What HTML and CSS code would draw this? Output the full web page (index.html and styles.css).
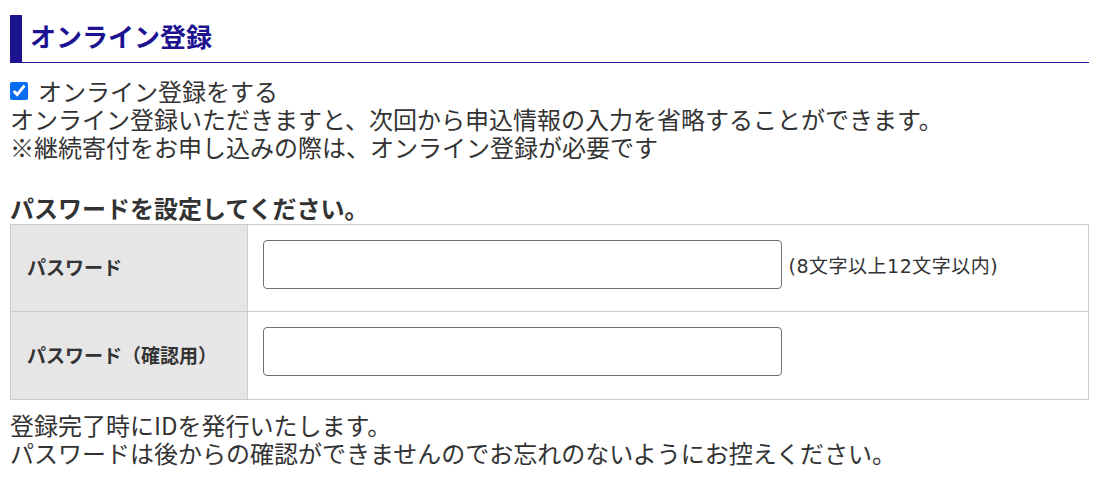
FILE: index.html
```html
<!DOCTYPE html>
<html lang="ja">
    <head>
        <meta charset="utf-8"/>
        <meta name="viewport" content="width=device-width, initial-scale=1">
        <title>オンライン登録</title>
        <link rel="stylesheet" href="styles.css">
    </head>
    <body>
        <div class="register">
            <h2 class="register-title">オンライン登録</h2>

            <div class="register-intro">
                <label class="check-line">
                    <input type="checkbox" checked>
                    <span>オンライン登録をする</span>
                </label>
                <p>オンライン登録いただきますと、次回から申込情報の入力を省略することができます。</p>
                <p>※継続寄付をお申し込みの際は、オンライン登録が必要です</p>
            </div>

            <h3 class="register-sub">パスワードを設定してください。</h3>

            <table class="form-table">
                <tr>
                    <th>パスワード</th>
                    <td>
                        <input type="password" class="text-input">
                        <span class="note">(8文字以上12文字以内)</span>
                    </td>
                </tr>
                <tr>
                    <th>パスワード（確認用）</th>
                    <td>
                        <input type="password" class="text-input">
                    </td>
                </tr>
            </table>

            <div class="register-foot">
                <p>登録完了時にIDを発行いたします。</p>
                <p>パスワードは後からの確認ができませんのでお忘れのないようにお控えください。</p>
            </div>
        </div>
    </body>
</html>
```

FILE: styles.css
```css
:root {
    --text: #333;
    --navy: #1d1391;
    --line: #cccccc;
}

html, body {
    margin: 0;
    padding: 0;
    background: #fff;
    color: var(--text);
    font-family: "Noto Sans CJK JP", "Noto Sans", sans-serif;
}

.register {
    padding: 15px 10px 0 10px;
}

.register p {
    margin: 0;
}

.register-title {
    margin: 0;
    height: 48px;
    box-sizing: border-box;
    display: flex;
    align-items: center;
    border-left: 12px solid var(--navy);
    border-bottom: 1px solid var(--navy);
    padding: 0 0 5px 8px;
    font-size: 26px;
    font-weight: bold;
    color: var(--navy);
    line-height: 1;
}

.register-intro {
    margin-top: 14px;
    font-size: 24px;
    line-height: 28px;
}

.check-line {
    display: flex;
    align-items: center;
    gap: 10px;
}

.check-line input {
    margin: 0;
    width: 18px;
    height: 18px;
    accent-color: #0a6cf0;
}

.register-sub {
    margin: 33px 0 2px 0;
    font-size: 24px;
    line-height: 28px;
    font-weight: bold;
}

.form-table {
    width: 100%;
    border-collapse: collapse;
}

.form-table th,
.form-table td {
    border: 1px solid var(--line);
    height: 87px;
    box-sizing: border-box;
}

.form-table tr + tr th,
.form-table tr + tr td {
    height: 88px;
}

.form-table th {
    width: 237px;
    background: #e6e6e6;
    text-align: left;
    padding: 0 16px 3px 16px;
    font-size: 19px;
    font-weight: bold;
}

.form-table td {
    padding: 15px 15px 22px 15px;
    vertical-align: top;
}

.text-input {
    box-sizing: border-box;
    width: 519px;
    height: 49px;
    border: 1px solid #707070;
    border-radius: 4px;
    margin: 0;
    vertical-align: middle;
}

.note {
    font-family: "DejaVu Sans", "Noto Sans CJK JP", sans-serif;
    font-size: 19px;
    letter-spacing: 0.5px;
    margin-left: 3px;
    vertical-align: middle;
}

.register-foot {
    margin-top: 11px;
    font-size: 24px;
    line-height: 28px;
}
```
